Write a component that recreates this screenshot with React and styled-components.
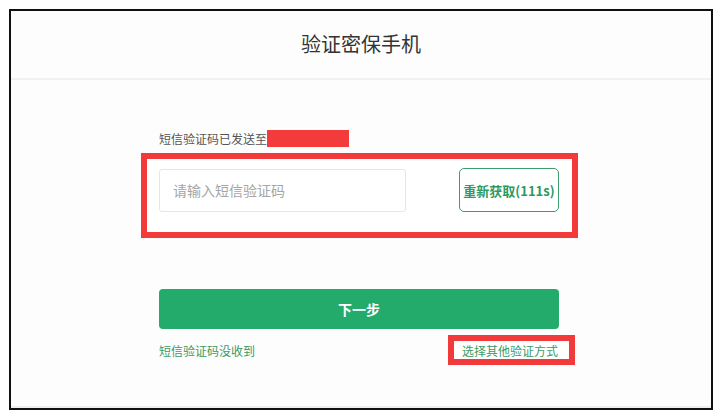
import styled, { createGlobalStyle } from "styled-components";

const GlobalStyle = createGlobalStyle`
  body {
    margin: 0;
    background: #ffffff;
    font-family: "Noto Sans CJK SC", "Noto Sans", sans-serif;
  }
`;

const Frame = styled.div`
  box-sizing: border-box;
  width: 704px;
  height: 401px;
  margin: 9px;
  border: 2px solid #111;
  background: #fdfdfd;
  display: flex;
  flex-direction: column;
`;

const Header = styled.header`
  height: 67px;
  border-bottom: 2px solid #f1f1f1;
  display: flex;
  align-items: center;
  justify-content: center;
`;

const Title = styled.h1`
  margin: 0 0 2px;
  font-size: 20px;
  font-weight: 400;
  color: #333;
`;

const Body = styled.div`
  flex: 1;
  border-bottom: 2px solid #efefef;
  padding: 50px 0 0 148px;
  display: flex;
  flex-direction: column;
`;

const SentLine = styled.div`
  display: flex;
  align-items: center;
  height: 17px;
  font-size: 12px;
  color: #555;
`;

const Masked = styled.span`
  display: inline-block;
  width: 82px;
  height: 17px;
  background: #f33b3b;
`;

// red annotation around the code row
const Highlight = styled.div`
  box-sizing: border-box;
  width: 437px;
  margin: 6px 0 0 -18px;
  padding: 9px 13px 20px 12px;
  border: 6px solid #f23a3a;
  background: #fff;
`;

const CodeRow = styled.div`
  display: flex;
  justify-content: space-between;
  align-items: center;
`;

const CodeInput = styled.input`
  box-sizing: border-box;
  width: 247px;
  height: 43px;
  padding: 0 13px;
  border: 1px solid #e6e6e6;
  border-radius: 3px;
  background: #fff;
  font-family: inherit;
  font-size: 14px;
  color: #333;
  outline: none;

  &::placeholder {
    color: #a5a5a5;
  }
`;

const ResendButton = styled.button`
  box-sizing: border-box;
  width: 100px;
  height: 44px;
  padding: 0;
  border: 1px solid #3d9d6c;
  border-radius: 5px;
  background: #fff;
  font-family: inherit;
  font-size: 13px;
  font-weight: 700;
  color: #2c9a5f;
`;

const NextButton = styled.button`
  width: 400px;
  height: 40px;
  margin-top: 51px;
  border: 0;
  border-radius: 4px;
  background: #23ab6b;
  font-family: inherit;
  font-size: 14px;
  font-weight: 700;
  color: #fff;
`;

const LinkRow = styled.div`
  width: 400px;
  height: 30px;
  margin-top: 6px;
  display: flex;
  justify-content: space-between;
  align-items: center;
`;

const TextLink = styled.a`
  box-sizing: border-box;
  font-size: 12px;
  color: #3b9a65;
  text-decoration: none;
  ${(p) =>
    p.$marked &&
    `
    height: 30px;
    display: flex;
    align-items: center;
    padding: 0 11px 0 8px;
    margin-right: -16px;
    border: 6px solid #f23a3a;
    background: #fff;
  `}
`;

export default function App() {
  return (
    <>
      <GlobalStyle />
      <Frame>
        <Header>
          <Title>验证密保手机</Title>
        </Header>
        <Body>
          <SentLine>
            短信验证码已发送至
            <Masked />
          </SentLine>
          <Highlight>
            <CodeRow>
              <CodeInput placeholder="请输入短信验证码" />
              <ResendButton>重新获取(111s)</ResendButton>
            </CodeRow>
          </Highlight>
          <NextButton>下一步</NextButton>
          <LinkRow>
            <TextLink href="#">短信验证码没收到</TextLink>
            <TextLink href="#" $marked>
              选择其他验证方式
            </TextLink>
          </LinkRow>
        </Body>
      </Frame>
    </>
  );
}
